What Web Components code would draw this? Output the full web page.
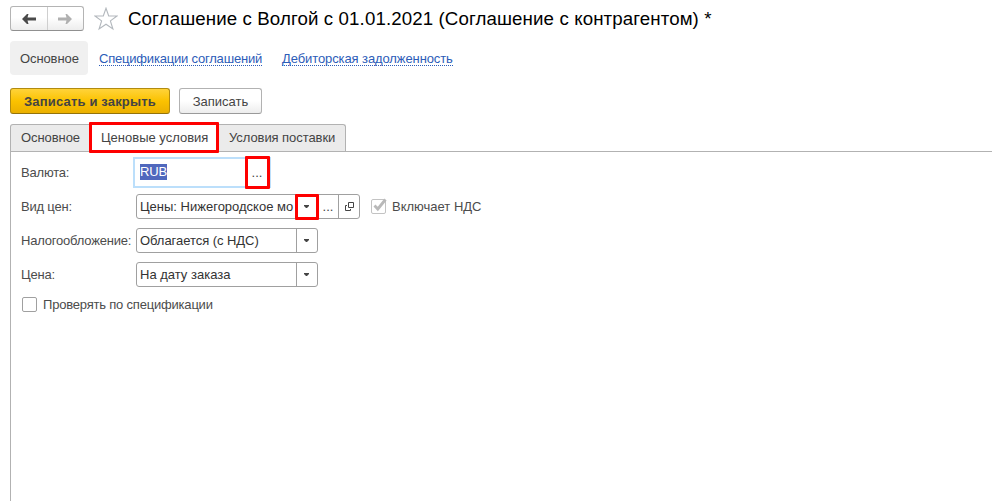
<!DOCTYPE html>
<html lang="ru">
<head>
<meta charset="utf-8">
<title>Соглашение с контрагентом</title>
<style>
html, body { margin: 0; height: 100%; background: #fff; overflow: hidden; }
body { font: 13px/16px "Liberation Sans", Arial, sans-serif; color: #444; }
</style>
</head>
<body>
<agreement-form></agreement-form>
<script>
function define(name, html) {
  const t = document.createElement('template');
  t.innerHTML = '<style>*{box-sizing:border-box}:host{box-sizing:border-box;white-space:nowrap}</style>' + html;
  customElements.define(name, class extends HTMLElement {
    constructor() {
      super();
      this.attachShadow({ mode: 'open' }).appendChild(t.content.cloneNode(true));
    }
  });
}

define('history-buttons', `
<style>
:host { display: flex; width: 74px; height: 25px; border: 1px solid #b4b4b4; border-bottom-color: #909090; border-radius: 3px; background: linear-gradient(#fff 45%, #ededed); }
span { flex: 1; display: flex; align-items: center; justify-content: center; }
span + span { border-left: 1px solid #cfcfcf; }
</style>
<span><svg width="14" height="10" viewBox="0 0 14 10"><path d="M0 5L5 0H6.500L5.500 3.500H14V6.500H5.500L6.500 10H5Z" fill="#4a4a4a"/></svg></span>
<span><svg width="14" height="10" viewBox="0 0 14 10"><path d="M14 5L9 0H7.500L8.500 3.500H0V6.500H8.500L7.500 10H9Z" fill="#b0b0b0"/></svg></span>`);

define('favorite-star', `
<style>:host { display: block; width: 24px; height: 24px; } svg { display: block; }</style>
<svg width="24" height="24" viewBox="0 0 24 24"><path d="M12 1.200L14.700 9H23L16.400 13.900L18.900 22L12 17.200L5.100 22L7.600 13.900L1 9H9.300Z" fill="#fff" stroke="#b3b8bd" stroke-width="1.100"/></svg>`);

define('nav-link', `
<style>
:host { display: block; color: #2c5cb8; }
span { display: block; height: 15px; line-height: 16px; border-bottom: 1px dotted #2c5cb8; }
:host([current]) { color: #444; background: #f0f0f0; border-radius: 4px; padding: 10px 10px 9px; width: 78px; height: 34px; letter-spacing: -.1px; }
:host([current]) span { border: 0; }
</style><span><slot></slot></span>`);

define('push-button', `
<style>
:host { display: flex; align-items: center; justify-content: center; height: 26px; padding-top: 1px; border: 1px solid #b2b2b2; border-bottom-color: #9a9a9a; border-radius: 3px; background: linear-gradient(#fff 50%, #ededed); }
:host([primary]) { font-weight: bold; letter-spacing: .17px; border-color: #b18b10; border-bottom-color: #94730a; background: linear-gradient(#ffd33a, #fbc200 50%, #ebb000); }
</style><slot></slot>`);

define('form-tab', `
<style>
:host { display: block; height: 27px; padding: 5px 0 0 10px; border: 1px solid #b2b2b2; border-bottom: 0; background: #ebebeb; letter-spacing: -.07px; }
:host([first]) { border-top-left-radius: 3px; }
:host([last]) { border-top-right-radius: 3px; }
:host([active]) { position: relative; background: #fff; height: 28px; margin-bottom: -1px; }
</style><slot></slot>`);

define('highlight-frame', `
<style>:host { display: block; position: absolute; z-index: 1; border: 3px solid #fe0000; border-radius: 1px; pointer-events: none; }</style>`);

define('field-button', `
<style>
:host { display: flex; align-items: center; justify-content: center; position: relative; flex: none; width: 21px; border-left: 1px solid #a0a0a0; color: #444; }
:host([plain]) { border-left-color: transparent; }
svg { display: none; }
:host([kind=drop]) { padding-right: 1px; }
:host([kind=drop]) .drop, :host([kind=open]) .open { display: block; }
</style>
<svg class="drop" width="5" height="3" viewBox="0 0 5 3"><path d="M0 0H5V1L3 3H2L0 1Z" fill="#444"/></svg>
<svg class="open" width="9" height="9" viewBox="0 0 9 9" fill="none" stroke="#444"><path d="M3.500 .5H8.500V5.500H3.500ZM2 3.500H.5V8.500H5.500V7"/></svg>
<slot></slot>`);

define('input-field', `
<style>
:host { display: flex; height: 25px; border: 1px solid #a0a0a0; border-radius: 3px; background: #fff; color: #333; margin-left: 3px; }
.value { flex: 1; min-width: 0; overflow: hidden; padding: 4px 0 0 3px; }
:host([focused]) { border: 2px solid #bcdffb; border-radius: 0; height: 31px; margin: -3px 0 0; }
:host([focused]) .value { padding: 5px 0 0 5px; }
</style><div class="value"><slot></slot></div><slot name="buttons"></slot>`);

define('check-item', `
<style>
:host { display: flex; gap: 6px; height: 16px; color: #4c4c4c; }
i { display: block; width: 15px; height: 15px; border: 1px solid #a0a0a0; border-radius: 2px; }
svg { display: none; position: relative; overflow: visible; }
:host([checked]) svg { display: block; }
:host([checked]) i { border-color: #c3c3c3; }
</style>
<i><svg width="13" height="13" viewBox="0 0 13 13"><path d="M2.500 5.500L5.800 9L13.500 -.5" fill="none" stroke="#b9b9b9" stroke-width="2.800"/></svg></i>
<span><slot></slot></span>`);

define('agreement-form', `
<style>
:host { display: flex; flex-direction: column; height: 501px; padding: 6px 0 0 10px; }
header { display: flex; height: 35px; }
favorite-star { margin: 1px 0 0 10px; }
h1 { margin: 1px 0 0 10px; font: 18.700px/24px "Liberation Sans", Arial, sans-serif; letter-spacing: .11px; color: #000; }
nav { display: flex; height: 47px; }
nav nav-link:not([current]) { margin-top: 10px; }
.commands { display: flex; gap: 9px; height: 36px; }
.tabs { display: flex; height: 27px; }
.tabs form-tab + form-tab { margin-left: -1px; }
.page { flex: 1; border: 1px solid #b2b2b2; border-right: 0; border-bottom: 0; padding: 8px 0 0 10px; }
.row { display: grid; grid-template-columns: 112px auto auto; justify-content: start; height: 34px; }
.row > span { padding-top: 5px; color: #4c4c4c; letter-spacing: -.2px; }
mark { display: inline-block; height: 16px; background: #5068bd; color: #fff; letter-spacing: -.1px; }
</style>
<header><history-buttons></history-buttons><favorite-star></favorite-star><h1>Соглашение с Волгой с 01.01.2021 (Соглашение с контрагентом) *</h1></header>
<nav><nav-link current>Основное</nav-link><nav-link style="margin-left:11px;width:163px;letter-spacing:-.2px">Спецификации соглашений</nav-link><nav-link style="margin-left:20px;width:171px;letter-spacing:-.1px">Дебиторская задолженность</nav-link></nav>
<div class="commands"><push-button primary style="width:160px">Записать и закрыть</push-button><push-button style="width:83px">Записать</push-button></div>
<div class="tabs">
<form-tab first style="width:81px">Основное</form-tab>
<form-tab active style="width:129px;letter-spacing:0">Ценовые условия<highlight-frame style="left:-2px;top:-3px;width:130px;height:31px"></highlight-frame></form-tab>
<form-tab last style="width:128px">Условия поставки</form-tab>
</div>
<div class="page">
<div class="row"><span>Валюта:</span><input-field focused style="width:138px"><mark>RUB</mark><field-button plain slot="buttons" style="width:25px">...<highlight-frame style="left:0;top:-3px;width:25px;height:33px"></highlight-frame></field-button></input-field></div>
<div class="row"><span>Вид цен:</span><input-field style="width:224px">Цены: Нижегородское мо<field-button kind="drop" slot="buttons"><highlight-frame style="left:-2px;top:-1px;width:24px;height:26px"></highlight-frame></field-button><field-button plain slot="buttons">...</field-button><field-button kind="open" slot="buttons"></field-button></input-field><check-item checked style="margin:5px 0 0 11px">Включает НДС</check-item></div>
<div class="row"><span>Налогообложение:</span><input-field style="width:182px;letter-spacing:-.05px">Облагается (с НДС)<field-button kind="drop" slot="buttons"></field-button></input-field></div>
<div class="row"><span>Цена:</span><input-field style="width:182px">На дату заказа<field-button kind="drop" slot="buttons"></field-button></input-field></div>
<check-item style="margin:1px 0 0 1px;letter-spacing:-.2px">Проверять по спецификации</check-item>
</div>`);
</script>
</body>
</html>
